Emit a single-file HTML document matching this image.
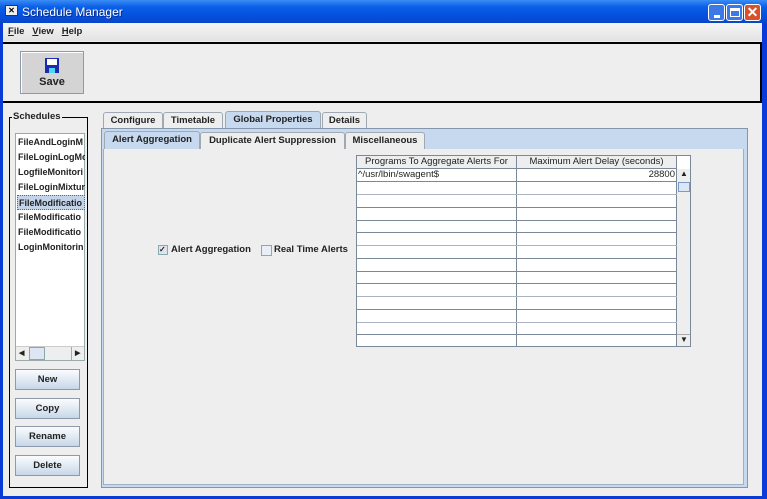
<!DOCTYPE html><html><head><style>
*{margin:0;padding:0;box-sizing:border-box}
body{width:767px;height:499px;overflow:hidden;background:#0a3bd6;font-family:"Liberation Sans",sans-serif;font-size:10px;font-weight:bold;color:#222;position:relative}
.a{position:absolute;white-space:nowrap}
.tab{position:absolute;border:1px solid #a0a8b4;border-bottom:none;border-radius:3px 3px 0 0;background:#eeeeee;text-align:center;line-height:15px;font-size:9.5px;white-space:nowrap;overflow:hidden}
.btn{position:absolute;left:15px;width:65px;height:21px;border:1px solid #8d9aab;background:linear-gradient(#fafcfe,#dce6f1 60%,#c7d6e8);text-align:center;line-height:19px;font-size:9.5px}
.li{position:absolute;left:1px;width:68px;height:15px;line-height:15px;font-size:9px;white-space:nowrap;overflow:hidden;padding-left:1px}
.row{position:absolute;left:0;width:320px;height:1px;background:#aab4c0}
</style></head><body>
<div class="a" style="left:0;top:0;width:767px;height:23px;background:linear-gradient(#3a8cf4,#0a5fe8 30%,#0550de 70%,#0a46c8)"></div>
<div class="a" style="left:5px;top:5px;width:13px;height:11px;background:#eee;border:1px solid #333;font-size:8px;line-height:9px;text-align:center;color:#000">✕</div>
<div class="a" style="left:22px;top:5px;color:#fff;font-weight:normal;font-size:12px;text-shadow:1px 1px #0a2a8a">Schedule Manager</div>
<div class="a" style="left:708px;top:4px;width:17px;height:17px;border:1px solid #fff;border-radius:3px;background:#3b78e8"><div class="a" style="left:5px;top:10px;width:6px;height:3px;background:#fff"></div></div>
<div class="a" style="left:726px;top:4px;width:17px;height:17px;border:1px solid #fff;border-radius:3px;background:#3b78e8"><div class="a" style="left:3px;top:3px;width:10px;height:9px;border:1px solid #fff;border-top:3px solid #fff"></div></div>
<div class="a" style="left:744px;top:4px;width:17px;height:17px;border:1px solid #fff;border-radius:3px;background:#d9522b;color:#fff;font-size:14px;line-height:15px;text-align:center">✕</div>
<div class="a" style="left:3px;top:23px;width:759px;height:473px;background:#eeeeee"></div>
<div class="a" style="left:3px;top:23px;width:759px;height:18px;background:linear-gradient(#f6f6f6,#e2e2e2)"></div>
<div class="a" style="left:8px;top:26px;font-size:9.5px"><u>F</u>ile &nbsp; <u>V</u>iew &nbsp; <u>H</u>elp</div>
<div class="a" style="left:3px;top:42px;width:759px;height:61px;border-top:2px solid #000;border-bottom:2px solid #000;border-right:2px solid #000"></div>
<div class="a" style="left:20px;top:51px;width:64px;height:43px;border:1px solid #8d9aab;background:#d4d4d4;box-shadow:inset 1px 1px #fff"></div>
<div class="a" style="left:45px;top:58px;width:14px;height:15px;background:#1c2bb0"><div class="a" style="left:2px;top:1px;width:10px;height:6px;background:#fff"></div><div class="a" style="left:4px;top:10px;width:6px;height:5px;background:#4fd6f0"></div></div>
<div class="a" style="left:20px;top:76px;width:64px;text-align:center;font-size:11px">Save</div>
<div class="a" style="left:9px;top:117px;width:79px;height:371px;border:1px solid #000"></div>
<div class="a" style="left:12px;top:111px;background:#eee;padding:0 1px;font-size:9.5px">Schedules</div>
<div class="a" style="left:15px;top:133px;width:70px;height:228px;border:1px solid #9aa;background:#fff">
<div class="li" style="top:1px">FileAndLoginM</div>
<div class="li" style="top:16px">FileLoginLogMo</div>
<div class="li" style="top:31px">LogfileMonitori</div>
<div class="li" style="top:46px">FileLoginMixtur</div>
<div class="li" style="top:61px;background:#c2d3ea;border:1px dotted #667">FileModificatio</div>
<div class="li" style="top:76px">FileModificatio</div>
<div class="li" style="top:91px">FileModificatio</div>
<div class="li" style="top:106px">LoginMonitorin</div>
<div class="a" style="left:0;top:212px;width:68px;height:14px;background:#eee;border-top:1px solid #ccc"><div class="a" style="left:3px;top:2px;font-size:7px">◀</div><div class="a" style="left:13px;top:0;width:16px;height:13px;border:1px solid #8aa;background:#dde6f2"></div><div class="a" style="left:55px;top:0;width:12px;height:13px;border-left:1px solid #aaa;font-size:7px;padding:2px 0 0 3px">▶</div></div>
</div>
<div class="btn" style="top:369px">New</div>
<div class="btn" style="top:398px">Copy</div>
<div class="btn" style="top:426px">Rename</div>
<div class="btn" style="top:455px">Delete</div>
<div class="tab" style="left:103px;top:112px;width:60px;height:17px">Configure</div>
<div class="tab" style="left:163px;top:112px;width:60px;height:17px">Timetable</div>
<div class="tab" style="left:225px;top:111px;width:96px;height:18px;background:#c6d9ee">Global Properties</div>
<div class="tab" style="left:322px;top:112px;width:45px;height:17px">Details</div>
<div class="a" style="left:101px;top:128px;width:647px;height:360px;border:1px solid #8496aa;background:#c6d9ee"></div>
<div class="tab" style="left:104px;top:131px;width:96px;height:18px;background:#c6d9ee">Alert Aggregation</div>
<div class="tab" style="left:200px;top:132px;width:145px;height:17px">Duplicate Alert Suppression</div>
<div class="tab" style="left:345px;top:132px;width:80px;height:17px">Miscellaneous</div>
<div class="a" style="left:103px;top:149px;width:641px;height:336px;background:#eee;border:1px solid #9fb0c4;border-top:none"></div>
<div class="a" style="left:158px;top:245px;width:10px;height:10px;border:1px solid #8aa;background:#dde4ee;font-size:8px;line-height:8px">✓</div>
<div class="a" style="left:171px;top:244px;font-size:9.5px">Alert Aggregation</div>
<div class="a" style="left:261px;top:245px;width:11px;height:11px;border:1px solid #8aa;background:#e8eef6"></div>
<div class="a" style="left:274px;top:244px;font-size:9.5px">Real Time Alerts</div>
<div class="a" style="left:356px;top:155px;width:335px;height:192px;border:1px solid #7a8898;background:#fff;font-weight:normal;font-size:9.5px">
<div class="a" style="left:0;top:0;width:320px;height:13px;background:#eee;border-bottom:1px solid #7a8898"></div>
<div class="a" style="left:0;top:0;width:159px;text-align:center">Programs To Aggregate Alerts For</div>
<div class="a" style="left:160px;top:0;width:159px;text-align:center">Maximum Alert Delay (seconds)</div>
<div class="a" style="left:1px;top:13px">^/usr/lbin/swagent$</div>
<div class="a" style="left:250px;top:13px;width:68px;text-align:right">28800</div>
<div class="a" style="left:159px;top:0;width:1px;height:190px;background:#7a8898"></div>
<div class="a" style="left:319px;top:0;width:1px;height:190px;background:#7a8898"></div>
<div class="row" style="top:25px;background:#7a8898"></div><div class="row" style="top:38px"></div><div class="row" style="top:51px;background:#7a8898"></div><div class="row" style="top:64px;background:#7a8898"></div><div class="row" style="top:76px;background:#7a8898"></div><div class="row" style="top:89px"></div><div class="row" style="top:102px;background:#7a8898"></div><div class="row" style="top:115px;background:#7a8898"></div><div class="row" style="top:127px;background:#7a8898"></div><div class="row" style="top:140px"></div><div class="row" style="top:153px;background:#7a8898"></div><div class="row" style="top:166px"></div><div class="row" style="top:178px;background:#7a8898"></div>
<div class="a" style="left:320px;top:13px;width:13px;height:177px;background:#eee"></div>
<div class="a" style="left:323px;top:13px;font-size:8px">▲</div>
<div class="a" style="left:321px;top:26px;width:12px;height:10px;border:1px solid #7a9ac8;background:#dde6f4"></div>
<div class="a" style="left:320px;top:178px;width:13px;height:12px;border-top:1px solid #aaa;font-size:8px;padding-left:3px">▼</div>
</div>
</body></html>
